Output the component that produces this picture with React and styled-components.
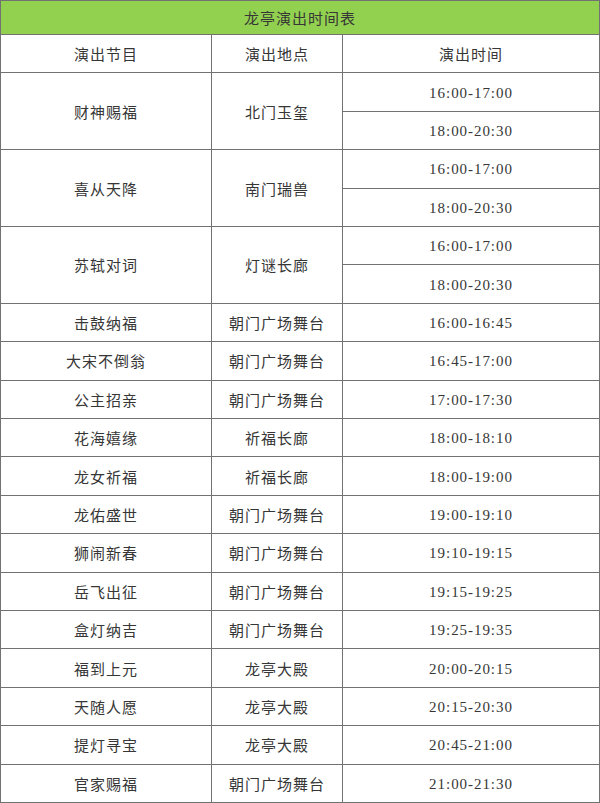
import React, { Fragment } from "react";
import styled, { createGlobalStyle } from "styled-components";

const GlobalStyle = createGlobalStyle`
  html, body {
    margin: 0;
    padding: 0;
    background: #ffffff;
  }
  body {
    font-family: "Liberation Serif", "Noto Sans CJK SC", serif;
  }
`;

const Grid = styled.div`
  width: 600px;
  height: 803px;
  box-sizing: border-box;
  padding: 1px;
  display: grid;
  grid-template-columns: 210px 130px 1fr;
  grid-template-rows: 33px repeat(20, 1fr);
  gap: 1px;
  background: #727272;
`;

const Cell = styled.div`
  background: ${(p) => (p.$title ? "#92d050" : "#ffffff")};
  grid-column: ${(p) => (p.$title ? "1 / -1" : "auto")};
  grid-row: ${(p) => (p.$span ? `span ${p.$span}` : "auto")};
  display: flex;
  align-items: center;
  justify-content: center;
  font-size: 15px;
  color: #363636;
  letter-spacing: ${(p) => (p.$time ? "0.95px" : "1px")};
  padding-top: ${(p) => (p.$time ? "2px" : "0")};
`;

const groups = [
  { name: "财神赐福", place: "北门玉玺", times: ["16:00-17:00", "18:00-20:30"] },
  { name: "喜从天降", place: "南门瑞兽", times: ["16:00-17:00", "18:00-20:30"] },
  { name: "苏轼对词", place: "灯谜长廊", times: ["16:00-17:00", "18:00-20:30"] },
];

const rows = [
  ["击鼓纳福", "朝门广场舞台", "16:00-16:45"],
  ["大宋不倒翁", "朝门广场舞台", "16:45-17:00"],
  ["公主招亲", "朝门广场舞台", "17:00-17:30"],
  ["花海嬉缘", "祈福长廊", "18:00-18:10"],
  ["龙女祈福", "祈福长廊", "18:00-19:00"],
  ["龙佑盛世", "朝门广场舞台", "19:00-19:10"],
  ["狮闹新春", "朝门广场舞台", "19:10-19:15"],
  ["岳飞出征", "朝门广场舞台", "19:15-19:25"],
  ["盒灯纳吉", "朝门广场舞台", "19:25-19:35"],
  ["福到上元", "龙亭大殿", "20:00-20:15"],
  ["天随人愿", "龙亭大殿", "20:15-20:30"],
  ["提灯寻宝", "龙亭大殿", "20:45-21:00"],
  ["官家赐福", "朝门广场舞台", "21:00-21:30"],
];

export default function App() {
  return (
    <>
      <GlobalStyle />
      <Grid>
        <Cell $title>龙亭演出时间表</Cell>
        <Cell>演出节目</Cell>
        <Cell>演出地点</Cell>
        <Cell>演出时间</Cell>

        {groups.map((g) => (
          <Fragment key={g.name}>
            <Cell $span={g.times.length}>{g.name}</Cell>
            <Cell $span={g.times.length}>{g.place}</Cell>
            {g.times.map((t) => (
              <Cell $time key={t}>{t}</Cell>
            ))}
          </Fragment>
        ))}

        {rows.map(([name, place, time]) => (
          <Fragment key={name}>
            <Cell>{name}</Cell>
            <Cell>{place}</Cell>
            <Cell $time>{time}</Cell>
          </Fragment>
        ))}
      </Grid>
    </>
  );
}
